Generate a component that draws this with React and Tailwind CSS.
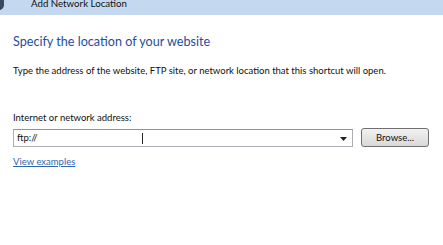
export default function App() {
  return (
    <div className="w-[443px] h-[245px] overflow-hidden bg-white font-['Lato',sans-serif] text-[#111]">
      <div className="h-[15px] bg-[#c4d8f0] flex items-end overflow-hidden relative">
        <div className="absolute left-[-6px] top-[-4px] w-[10px] h-[14px] rounded-full bg-[#3a4a5c]" />
        <span className="ml-[31px] mb-[6px] text-[9.7px] leading-none">Add Network Location</span>
      </div>
      <div className="px-[13px]">
        <h1 className="mt-[19px] text-[12.6px] leading-[16px] text-[#1e4e9c]">
          Specify the location of your website
        </h1>
        <p className="mt-[14px] text-[9.5px] leading-[14px]">
          Type the address of the website, FTP site, or network location that this shortcut will open.
        </p>
        <div className="mt-[33px] text-[9.5px] leading-[14px]">Internet or network address:</div>
        <div className="mt-[3px] flex items-center gap-[8px]">
          <div className="w-[340px] h-[18px] border border-[#abadb3] border-t-[#8b94a3] flex items-center relative">
            <span className="ml-[3px] text-[9.5px] leading-none">ftp://</span>
            <span className="absolute left-[128px] top-[3px] w-px h-[11px] bg-[#222]" />
            <svg className="absolute right-[5px] top-[7px]" width="7" height="4" viewBox="0 0 7 4">
              <path d="M0 0h7L3.5 4z" fill="#222" />
            </svg>
          </div>
          <button className="w-[68px] h-[19px] rounded-[3px] border border-[#707070] bg-gradient-to-b from-[#f2f2f2] to-[#d9d9d9] text-[9.5px] leading-none">
            Browse...
          </button>
        </div>
        <a className="mt-[8px] block w-fit text-[9.5px] leading-[14px] text-[#2f66b0] underline">
          View examples
        </a>
      </div>
    </div>
  );
}
